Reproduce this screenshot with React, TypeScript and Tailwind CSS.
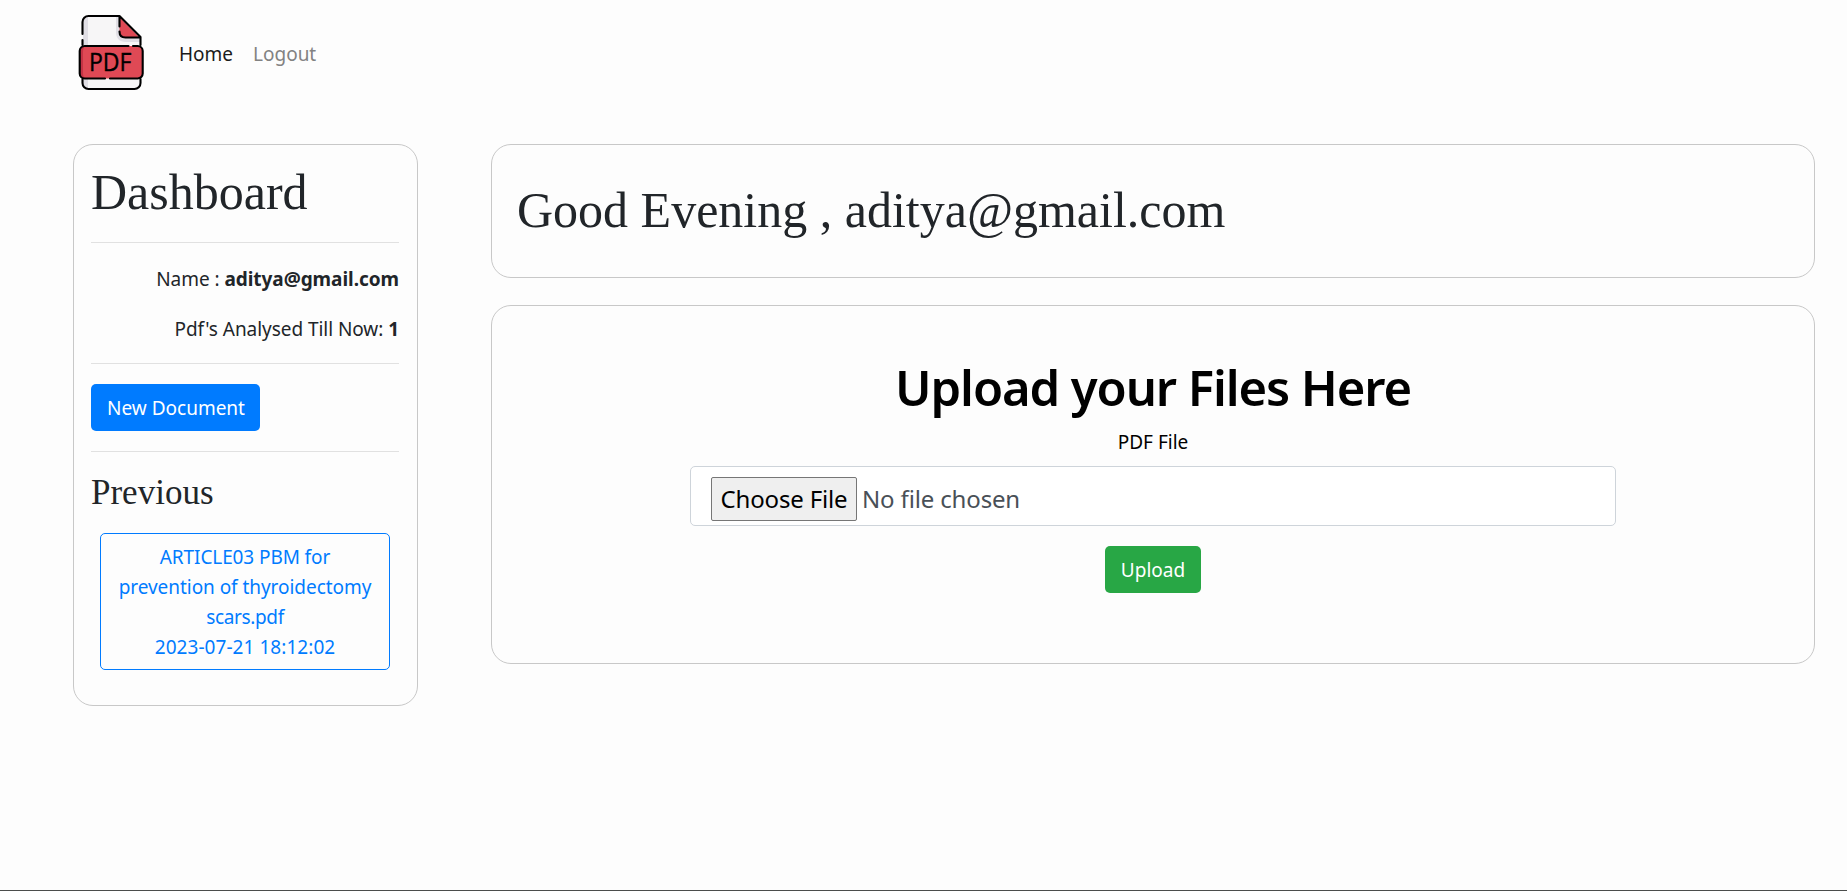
import React from "react";

function Logo() {
  return (
    <svg viewBox="0 0 70 78" className="h-[78px] w-[70px]" fill="none" stroke="#000" strokeWidth="2.1" strokeLinecap="round" strokeLinejoin="round">
      <path d="M4.500 69V8a6 6 0 0 1 6-6h31l21 21v46a6 6 0 0 1-6 6h-46a6 6 0 0 1-6-6z" fill="#f7f6f7" stroke="none" />
      <path d="M5 69V8a6 6 0 0 1 5-6v72a6 6 0 0 1-5-5z" fill="#e1dfe5" stroke="none" />
      <path d="M38 2h4l20 22v4H48C41 28 38 24 38 18z" fill="#e1dfe5" stroke="none" />
      <path d="M41.500 3l20 20.500H47.500a6 6 0 0 1-6-6z" fill="#df4955" stroke="none" />
      <path d="M4.500 20V8a6 6 0 0 1 6-6h31l21 21v8M4.500 26v5M41.500 3v9.500M41.500 17.500c0 4 2 6 6 6h14M4.500 65v4a6 6 0 0 0 6 6h46a6 6 0 0 0 6-6v-4" />
      <rect x="1.700" y="32" width="63" height="32.500" rx="5" fill="#df4955" stroke="none" />
      <path d="M2 37c0-3 2-5 5-5-2 2-2 4-2 7v19c0 3 0 5 2 6-3 0-5-2-5-5z" fill="#c43345" stroke="none" />
      <path d="M50.500 32H6.700a5 5 0 0 0-5 5v22.500a5 5 0 0 0 5 5H27M32 64.500h27.700a5 5 0 0 0 5-5V37a5 5 0 0 0-5-5H55" />
      <text x="11" y="57" fill="#000" stroke="#000" strokeWidth="0.4" textLength="42.5" lengthAdjust="spacingAndGlyphs" className="font-['Open_Sans',sans-serif] text-[25px]">PDF</text>
    </svg>
  );
}

const card = "rounded-[20px] border border-[#c8c8c8]";
const divider = "border-t border-[#e1e1e1]";
const serif = "font-['Liberation_Serif',serif]";

export default function App() {
  return (
    <div className="flex h-[891px] w-full flex-col border-b border-[#4b4d4c] bg-[#fdfdfd] font-['Noto_Sans',sans-serif] text-[19px] leading-[30px] text-[#212529]">
      <nav className="flex h-[144px] items-start pl-[78px] pt-[14px]">
        <Logo />
        <div className="ml-[31px] mt-[25px] flex gap-[20px]">
          <a className="w-[54px] whitespace-nowrap text-[#1b1b1b]">Home</a>
          <a className="whitespace-nowrap text-[#828282]">Logout</a>
        </div>
      </nav>
      <main className="flex items-start pl-[73px]">
        <aside className={`${card} h-[562px] w-[345px] pl-[17px] pr-[18px]`}>
          <h1 className={`${serif} mt-[17px] text-[50px] leading-[60px]`}>Dashboard</h1>
          <hr className={`${divider} mt-5`} />
          <p className="mt-[21px] whitespace-nowrap text-right tracking-[-0.05px]">Name : <b>aditya@gmail.com</b></p>
          <p className="mt-[20px] whitespace-nowrap text-right tracking-[-0.05px]">Pdf's Analysed Till Now: <b>1</b></p>
          <hr className={`${divider} mt-[19px]`} />
          <button className="mt-5 block h-[47px] w-[169px] whitespace-nowrap rounded-[5px] bg-[#007bff] pl-px text-white">New Document</button>
          <hr className={`${divider} mt-5`} />
          <h3 className={`${serif} mt-5 text-[35px] leading-[42px]`}>Previous</h3>
          <div className="ml-[9px] mt-[19px] flex h-[137px] w-[290px] flex-col items-center justify-center whitespace-nowrap rounded-[5px] border border-[#007bff] text-[#007bff]">
            <span className="tracking-[-0.1px]">ARTICLE03 PBM for</span>
            <span className="tracking-[-0.05px]">prevention of thyroidectomy</span>
            <span className="tracking-[-0.35px]">scars.pdf</span>
            <span className="tracking-[0.05px]">2023-07-21 18:12:02</span>
          </div>
        </aside>
        <div className="ml-[73px] w-[1324px]">
          <section className={`${card} h-[134px] pl-[25px] pt-[35px]`}>
            <h1 className={`${serif} text-[50px] leading-[60px]`}>Good Evening , aditya@gmail.com</h1>
          </section>
          <section className={`${card} mt-[27px] flex h-[359px] flex-col items-center pt-[51px] text-black`}>
            <h1 className="whitespace-nowrap text-[49px] font-semibold leading-[60px] tracking-[-1.1px]">Upload your Files Here</h1>
            <label className="mt-[10px]">PDF File</label>
            <div className="mt-[9px] flex h-[60px] w-[926px] items-start rounded-[5px] border border-[#ced4da] bg-white pl-[20px] pt-[10px] text-[24px] leading-[42px]">
              <button className="h-[44px] w-[146px] whitespace-nowrap rounded-[2px] border border-[#767676] bg-[#efefef] tracking-[-0.15px]">Choose File</button>
              <span className="ml-[5px] mt-px whitespace-nowrap tracking-[-0.15px] text-[#495057]">No file chosen</span>
            </div>
            <button className="mt-5 h-[47px] w-[96px] rounded-[5px] bg-[#28a745] text-white">Upload</button>
          </section>
        </div>
      </main>
    </div>
  );
}
